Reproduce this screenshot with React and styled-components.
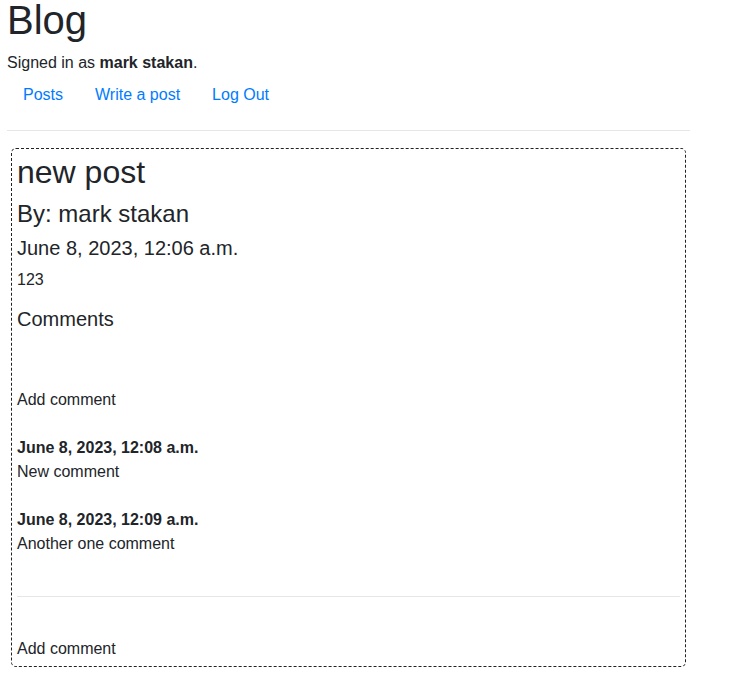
import React from 'react'
import styled, { createGlobalStyle } from 'styled-components'

const GlobalStyle = createGlobalStyle`
    html, body {
        margin: 0;
        padding: 0;
        background: #fff;
    }
    body {
        font-family: "Liberation Sans", Arial, Helvetica, sans-serif;
        font-size: 16px;
        line-height: 24px;
        color: #212529;
    }
`

const Page = styled.div`
    width: 683px;
    padding-left: 7px;
`

const Title = styled.h1`
    margin: 0;
    font-size: 40px;
    font-weight: 400;
    line-height: 40px;
`

const Signed = styled.p`
    margin: 11px 0 0;
`

const Nav = styled.nav`
    display: flex;
    margin: 0;
`

const NavLink = styled.a`
    display: block;
    padding: 8px 16px;
    color: #007bff;
    text-decoration: none;
`

const Rule = styled.hr`
    border: 0;
    border-top: 1px solid #e6e6e6;
    margin: ${p => p.$top}px 0 ${p => p.$bottom}px;
`

const Post = styled.article`
    margin: 0 4px;
    padding: 4px 5px 5px;
    border: 1px dashed #222;
    border-radius: 5px;
`

const Heading = styled.div`
    font-size: ${p => p.$size}px;
    line-height: 1.2;
    margin-top: ${p => p.$top || 0}px;
`

const Text = styled.p`
    margin: ${p => p.$top || 0}px 0 0;
`

const Comment = styled.div`
    margin-top: 24px;
    & strong {
        display: block;
        font-weight: 700;
    }
`

const comments = [
    { date: 'June 8, 2023, 12:08 a.m.', text: 'New comment' },
    { date: 'June 8, 2023, 12:09 a.m.', text: 'Another one comment' },
]

export default function App() {
    return (
        <Page>
            <GlobalStyle />
            <Title>Blog</Title>
            <Signed>Signed in as <strong>mark stakan</strong>.</Signed>
            <Nav>
                <NavLink href="#">Posts</NavLink>
                <NavLink href="#">Write a post</NavLink>
                <NavLink href="#">Log Out</NavLink>
            </Nav>
            <Rule $top={15} $bottom={17} />
            <Post>
                <Heading $size={32}>new post</Heading>
                <Heading $size={24} $top={9}>By: mark stakan</Heading>
                <Heading $size={20} $top={7}>June 8, 2023, 12:06 a.m.</Heading>
                <Text $top={8}>123</Text>
                <Heading $size={20} $top={15}>Comments</Heading>
                <Text $top={57}>Add comment</Text>
                {comments.map(c => (
                    <Comment key={c.date}>
                        <strong>{c.date}</strong>
                        {c.text}
                    </Comment>
                ))}
                <Rule $top={40} $bottom={40} />
                <Text>Add comment</Text>
            </Post>
        </Page>
    )
}
